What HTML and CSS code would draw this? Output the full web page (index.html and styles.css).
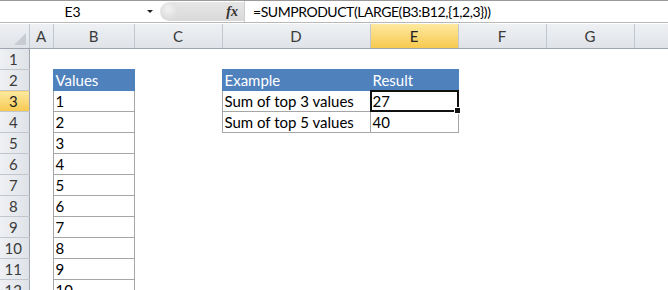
FILE: index.html
```html
<!DOCTYPE html>
<html lang="en">
<head>
    <meta charset="UTF-8">
    <title>LARGE with SUMPRODUCT</title>
    <link rel="stylesheet" href="styles.css">
</head>
<body>

    <div class="formula-bar">
        <div class="name-box">
            <span class="name">E3</span>
            <span class="arrow"></span>
        </div>
        <div class="grip">
            <span class="knob"></span>
            <span class="fx">fx</span>
        </div>
        <div class="formula">=SUMPRODUCT(LARGE(B3:B12,{1,2,3}))</div>
    </div>

    <table class="sheet">
        <colgroup>
            <col class="w-row">
            <col class="w-a">
            <col class="w-b">
            <col class="w-c">
            <col class="w-d">
            <col class="w-e">
            <col class="w-f">
            <col class="w-g">
            <col class="w-h">
        </colgroup>
        <thead>
            <tr>
                <th class="corner"><span class="tri"></span></th>
                <th>A</th>
                <th>B</th>
                <th>C</th>
                <th>D</th>
                <th class="active">E</th>
                <th>F</th>
                <th>G</th>
                <th></th>
            </tr>
        </thead>
        <tbody>
            <tr><th>1</th><td></td><td></td><td></td><td></td><td></td><td></td><td></td><td></td></tr>
            <tr><th>2</th><td></td><td class="hd">Values</td><td></td><td class="hd">Example</td><td class="hd">Result</td><td></td><td></td><td></td></tr>
            <tr><th class="active">3</th><td></td><td class="box">1</td><td></td><td class="box">Sum of top 3 values</td><td class="box cur">27<div class="sel"><span class="handle"></span></div></td><td></td><td></td><td></td></tr>
            <tr><th>4</th><td></td><td class="box">2</td><td></td><td class="box">Sum of top 5 values</td><td class="box">40</td><td></td><td></td><td></td></tr>
            <tr><th>5</th><td></td><td class="box">3</td><td></td><td></td><td></td><td></td><td></td><td></td></tr>
            <tr><th>6</th><td></td><td class="box">4</td><td></td><td></td><td></td><td></td><td></td><td></td></tr>
            <tr><th>7</th><td></td><td class="box">5</td><td></td><td></td><td></td><td></td><td></td><td></td></tr>
            <tr><th>8</th><td></td><td class="box">6</td><td></td><td></td><td></td><td></td><td></td><td></td></tr>
            <tr><th>9</th><td></td><td class="box">7</td><td></td><td></td><td></td><td></td><td></td><td></td></tr>
            <tr><th>10</th><td></td><td class="box">8</td><td></td><td></td><td></td><td></td><td></td><td></td></tr>
            <tr><th>11</th><td></td><td class="box">9</td><td></td><td></td><td></td><td></td><td></td><td></td></tr>
            <tr><th>12</th><td></td><td class="box">10</td><td></td><td></td><td></td><td></td><td></td><td></td></tr>
        </tbody>
    </table>

</body>
</html>
```

FILE: styles.css
```css
body {
    margin: 0;
    background: white;
    font-family: 'Lato', 'Open Sans', sans-serif;
    color: #000;
    overflow: hidden;
    width: 668px;
    height: 290px;
}

/* formula bar */
.formula-bar {
    display: flex;
    height: 21px;
    border-top: 1px solid #9a9a9a;
    border-bottom: 1px solid #b8b8b8;
    background: white;
}

.name-box {
    width: 160px;
    display: flex;
    align-items: center;
    font-size: 14px;
}

.name {
    width: 145px;
    text-align: center;
}

.arrow {
    width: 0;
    height: 0;
    border-left: 3px solid transparent;
    border-right: 3px solid transparent;
    border-top: 3px solid #222;
    margin-left: 2px;
}

.grip {
    width: 84px;
    margin: 1px 0;
    display: flex;
    align-items: center;
    justify-content: space-between;
    background: linear-gradient(#e6e6e6, #d9d9d9);
    border-radius: 10px 0 0 10px;
}

.knob {
    width: 17px;
    height: 17px;
    margin-left: 1px;
    border-radius: 50%;
    background: radial-gradient(circle at 45% 35%, #f2f2f2, #e0e0e0 60%, #d6d6d6);
}

.fx {
    font-family: 'Liberation Serif', serif;
    font-style: italic;
    font-weight: bold;
    font-size: 14px;
    color: #333;
    margin-right: 6px;
}

.formula {
    flex: 1;
    padding-left: 8px;
    font-size: 14px;
    letter-spacing: -0.45px;
    line-height: 21px;
    white-space: nowrap;
    border-left: 1px solid #cfcfcf;
}

/* grid */
.sheet {
    border-collapse: collapse;
    table-layout: fixed;
    width: 668px;
    margin-top: 1px;
    font-size: 15px;
}

.w-row { width: 29px; }
.w-a { width: 24px; }
.w-b { width: 81px; }
.w-c { width: 88px; }
.w-d { width: 148px; }
.w-e { width: 88px; }
.w-f { width: 88px; }
.w-g { width: 88px; }
.w-h { width: 34px; }

thead th {
    height: 24px;
    padding: 0;
    font-weight: normal;
    color: #3b3b3b;
    background: linear-gradient(#eef0f3, #dfe3e8);
    border-right: 1px solid #c2c7ce;
    border-bottom: 1px solid #9ea5ae;
}

tbody tr {
    height: 21px;
}

tbody th {
    padding: 0 2px 0 0;
    font-weight: normal;
    text-align: center;
    color: #3b3b3b;
    background: linear-gradient(90deg, #eef0f3, #dfe3e8);
    border-right: 1px solid #9ea5ae;
    border-bottom: 1px solid #c2c7ce;
    line-height: 18px;
}

th.active {
    background: linear-gradient(#fde9a0, #f7c94f);
    color: #222;
}

.corner {
    position: relative;
}

.tri {
    position: absolute;
    right: 3px;
    bottom: 3px;
    width: 0;
    height: 0;
    border-left: 12px solid transparent;
    border-bottom: 12px solid #c8ccd2;
}

td {
    padding: 0 2px 1px 2px;
    vertical-align: bottom;
    line-height: 18px;
    white-space: nowrap;
    overflow: hidden;
}

.box {
    border: 1px solid #a6a6a6;
}

.hd {
    background: #4f81bd;
    color: white;
    border: 1px solid #4f81bd;
}

.cur {
    position: relative;
    overflow: visible;
}

.sel {
    position: absolute;
    left: -1px;
    top: -1px;
    right: -1px;
    bottom: -1px;
    border: 2px solid #111;
}

.handle {
    position: absolute;
    right: -4px;
    bottom: -4px;
    width: 5px;
    height: 5px;
    background: #111;
    border: 1px solid white;
}
```
